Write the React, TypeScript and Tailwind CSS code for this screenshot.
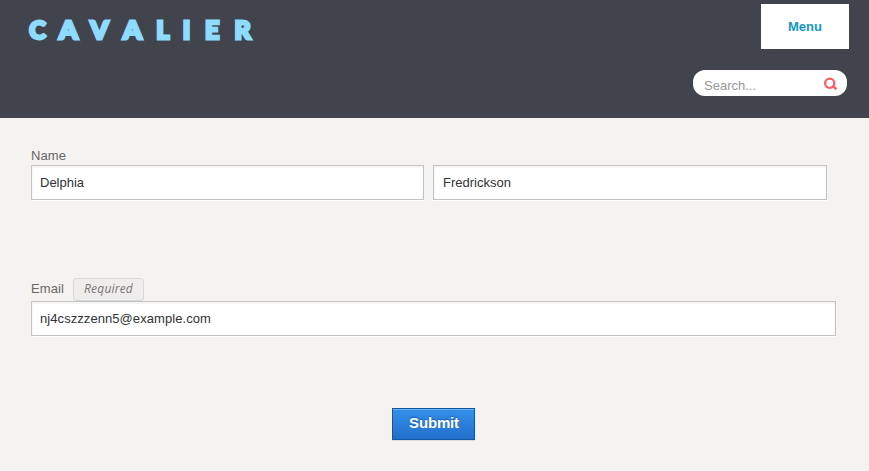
const logo = [
  { ch: 'C', cls: 'w-[31px]' },
  { ch: 'A', cls: 'w-[31px] scale-x-[1.07]' },
  { ch: 'V', cls: 'w-[31px] scale-x-[1.04]' },
  { ch: 'A', cls: 'w-[35px] scale-x-[1.07]' },
  { ch: 'L', cls: 'w-[25.5px]' },
  { ch: 'I', cls: 'w-[22px]' },
  { ch: 'E', cls: 'w-[29.5px]' },
  { ch: 'R', cls: 'w-[31px]' },
];

const field =
  'block h-[35px] border border-[#c4c4c4] bg-white px-2 pb-px text-[13px] text-[#333] shadow-[inset_0_1px_3px_rgba(0,0,0,0.08),0_1px_0_#fff] outline-none';

export default function App() {
  return (
    <div className="h-[471px] w-full overflow-hidden bg-[#f4f3f1] font-['Liberation_Sans',Arial,sans-serif] text-[13px]">
      <header className="flex h-[118px] justify-between bg-[#42444d] pr-5">
        <h1
          aria-label="Cavalier"
          className="flex h-10 pt-[10px] pl-[22px] text-center font-['Lato',sans-serif] text-[25px] leading-[39px] font-black text-[#8edbff] [-webkit-text-stroke:2.8px_#8edbff]"
        >
          {logo.map((l, i) => (
            <span key={i} className={l.cls}>
              {l.ch}
            </span>
          ))}
        </h1>
        <div className="flex flex-col items-end pt-1">
          <button className="h-[45px] w-[88px] bg-white font-bold text-[#1098c4]">Menu</button>
          <div className="mt-[21px] mr-[2px] flex h-[26px] w-[154px] items-center justify-between rounded-[12px] bg-white pr-[9px] pl-[11px]">
            <span className="pt-[5px] leading-[20px] text-[#999]">Search...</span>
            <svg width="15" height="14" viewBox="0 0 15 14" fill="none" stroke="#fb5e67">
              <circle cx="6.7" cy="7.2" r="4.6" strokeWidth="2.3" />
              <path d="M9.4 9.6 L13.4 13.2" strokeWidth="2.6" />
            </svg>
          </div>
        </div>
      </header>

      <form className="pt-[29px] pl-[31px]" onSubmit={(e) => e.preventDefault()}>
        <div className="h-[18px] leading-[18px] tracking-[0.1px] text-[#666]">Name</div>
        <div className="flex gap-[9px]">
          <input className={`${field} w-[393px]`} defaultValue="Delphia" />
          <input className={`${field} w-[394px] pl-[9px]`} defaultValue="Fredrickson" />
        </div>

        <div className="mt-[78px] flex h-[23px]">
          <label className="w-[42px] leading-[21px] tracking-[0.1px] text-[#666]">Email</label>
          <span className="h-[23px] w-[71px] rounded-[3px] border border-[#d8d8d8] bg-[#eeedec] text-center font-['Open_Sans',sans-serif] text-[12px] leading-[20px] tracking-[0.2px] text-[#777] italic">
            Required
          </span>
        </div>
        <input className={`${field} w-[805px] tracking-[0.07px]`} defaultValue="nj4cszzzenn5@example.com" />

        <button className="mt-[72px] ml-[361px] block h-[32px] w-[83px] border border-[#0f57a5] bg-linear-to-b from-[#3590e9] to-[#226fcc] pb-[2px] pl-px text-[15px] font-bold tracking-[-0.15px] text-white shadow-[inset_0_1px_0_#69b0f5,0_1px_0_#ddd] [text-shadow:0_-1px_1px_#1c5da8]">
          Submit
        </button>
      </form>
    </div>
  );
}
